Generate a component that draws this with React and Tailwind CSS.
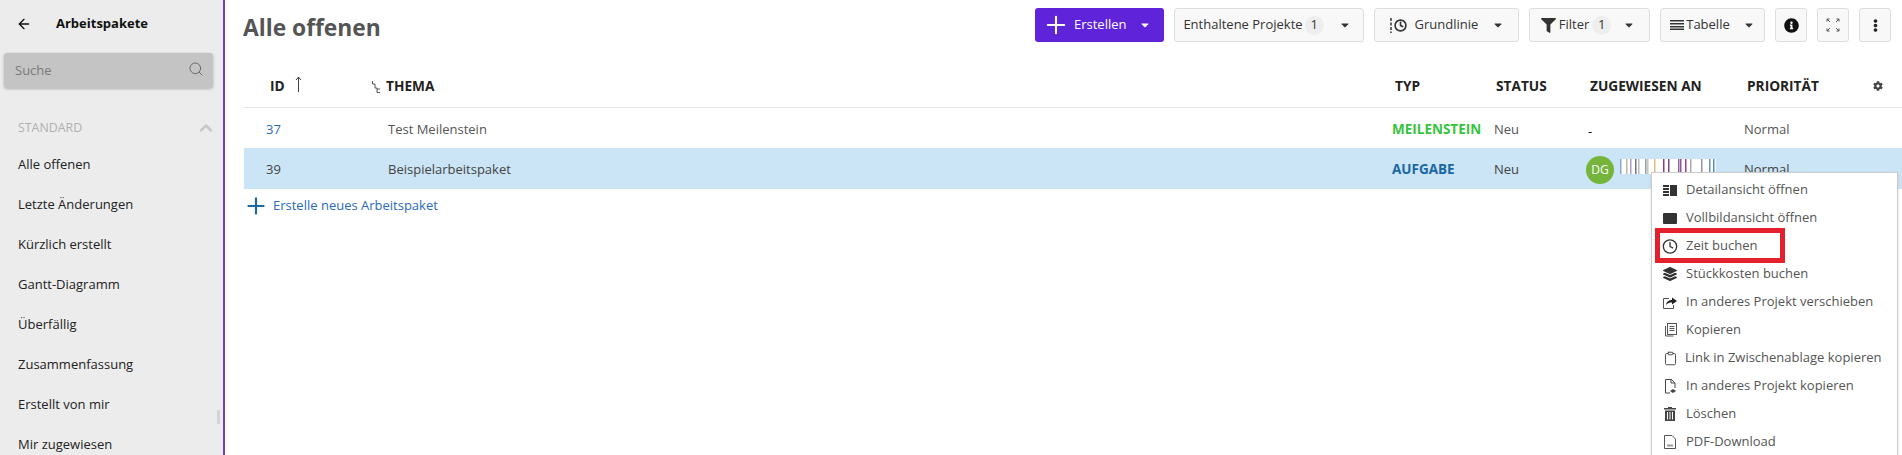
import { ArrowLeft, Search, ChevronUp, Plus, Clock, Clipboard } from 'lucide-react';
import { FaFilter, FaInfoCircle, FaCaretDown, FaCog, FaEllipsisV, FaLayerGroup } from 'react-icons/fa';

const sideItems = ['Alle offenen', 'Letzte Änderungen', 'Kürzlich erstellt', 'Gantt-Diagramm', 'Überfällig', 'Zusammenfassung', 'Erstellt von mir', 'Mir zugewiesen'];

const rowGrid = 'grid grid-cols-[122px_1003px_103px_92px_158px_1fr] pl-[22px] items-center';

// small drawings for the context menu
const DetailIcon = () => (
  <svg width="14" height="11" viewBox="0 0 14 11" fill="#333">
    <rect x="0" y="0" width="6" height="2" />
    <rect x="0" y="3" width="6" height="2" />
    <rect x="0" y="6" width="6" height="2" />
    <rect x="0" y="9" width="6" height="2" />
    <rect x="7" y="0" width="7" height="11" />
  </svg>
);
const FullIcon = () => (
  <svg width="14" height="11" viewBox="0 0 14 11" fill="#333"><rect width="14" height="11" rx="1" /></svg>
);
const MoveIcon = () => (
  <svg width="14" height="13" viewBox="0 0 14 13" fill="none" stroke="#555">
    <path d="M6 2.500H.5v10h10V9" />
    <path d="M3 9c.5-3.500 3-5 6-5V1.500L14 5 9 8.500V6.500C7 6.500 4.500 7 3 9z" fill="#222" stroke="none" />
  </svg>
);
const CopyIcon = () => (
  <svg width="13" height="14" viewBox="0 0 13 14" fill="none" stroke="#555">
    <path d="M1.500 3v10h8" />
    <rect x="3.500" y="0.500" width="9" height="11" />
    <path d="M5.500 3.500h5M5.500 5.500h5M5.500 7.500h5" />
  </svg>
);
const CopyProjectIcon = () => (
  <svg width="13" height="15" viewBox="0 0 13 15" fill="none" stroke="#444">
    <path d="M6 14H1.500V.5h6l3.500 3.500v5" />
    <path d="M7 .5V4h4" />
    <path d="M9 10l3 2-3 2-3-2z" fill="#444" stroke="none" />
  </svg>
);
const TrashIcon = () => (
  <svg width="12" height="14" viewBox="0 0 12 14" fill="#444">
    <rect x="0" y="1" width="12" height="1.500" />
    <rect x="4" y="0" width="4" height="1.500" />
    <path d="M1 3.500h10V14H1zM3 5v7.500h1V5zm2.500 0v7.500h1V5zM8 5v7.500h1V5z" fillRule="evenodd" />
  </svg>
);
const PdfIcon = () => (
  <svg width="12" height="14" viewBox="0 0 12 14" fill="none" stroke="#555">
    <path d="M.5.5h7.500l3.500 3.500v9.500H.5z" />
    <path d="M3 10.500h6" strokeWidth="2" stroke="#999" />
  </svg>
);

const menuItems = [
  ['Detailansicht öffnen', <DetailIcon />],
  ['Vollbildansicht öffnen', <FullIcon />],
  ['Zeit buchen', <Clock size={17} strokeWidth={2} color="#333" />],
  ['Stückkosten buchen', <FaLayerGroup size={14} color="#333" />],
  ['In anderes Projekt verschieben', <MoveIcon />],
  ['Kopieren', <CopyIcon />],
  ['Link in Zwischenablage kopieren', <Clipboard size={15} strokeWidth={1.500} color="#444" />, true],
  ['In anderes Projekt kopieren', <CopyProjectIcon />],
  ['Löschen', <TrashIcon />],
  ['PDF-Download', <PdfIcon />],
];

// assignee name in the picture is pixelated into coloured stripes
const stripes = [[0, '#8aa8d0'], [6, '#bdb8a8'], [10, '#a9a0c0'], [15, '#7b6a94'], [18, '#b0bcb8'], [25, '#8fa0a8'], [27, '#c9c4b8'], [34, '#e0bd78'], [43, '#8a3f7a'], [48, '#7a4a80'], [58, '#9060a0'], [60, '#8a5a9a'], [65, '#a03f80'], [70, '#a8acb0'], [81, '#a090a8'], [89, '#6a90c0'], [93, '#4a90d0']];

function ToolButton({ className, children }) {
  return (
    <button className={`h-[34px] flex items-center justify-center bg-[#f8f8f8] border border-[#dddddd] rounded-[3px] text-[#333333] shrink-0 ${className}`}>
      {children}
    </button>
  );
}

function Badge({ children }) {
  return <span className="w-[19px] h-[19px] rounded-full bg-[#eeeeee] flex items-center justify-center">{children}</span>;
}

export default function App() {
  return (
    <div className="h-[455px] overflow-hidden flex bg-white text-[13px] text-[#333333] relative font-['Open_Sans','Noto_Sans',sans-serif]">
      <aside className="w-[225px] shrink-0 bg-[#ececec] border-r-2 border-[#6f42c1] relative">
        <div className="h-[47px] flex items-center pl-[16px]">
          <ArrowLeft size={16} strokeWidth={2} color="#111" />
          <span className="ml-[24px] font-bold text-[13px] text-[#111111]">Arbeitspakete</span>
        </div>
        <div className="ml-[4px] w-[209px] mt-[6px] h-[35px] pt-[1px] bg-[#c4c4c4] rounded-[3px] shadow-[0_1px_3px_rgba(0,0,0,0.25)] flex items-center justify-between pl-[11px] pr-[9px]">
          <span className="text-[#7a7a7a]">Suche</span>
          <Search size={16} strokeWidth={1.500} color="#6a6a6a" className="-mt-[4px]" />
        </div>
        <div className="mt-[30px] pl-[18px] pr-[7px] h-[20px] flex items-center justify-between">
          <span className="text-[12.400px] text-[#b0b0b0]">STANDARD</span>
          <ChevronUp size={20} strokeWidth={3} color="#c8c8c8" />
        </div>
        <nav className="mt-[7px]">
          {sideItems.map((item) => (
            <div key={item} className="h-[40px] flex items-center pl-[18px] text-[#222222]">{item}</div>
          ))}
        </nav>
        <div className="absolute left-[217px] top-[410px] w-[3px] h-[14px] bg-[#d4d4d4]" />
      </aside>

      <main className="flex-1 min-w-0 pl-[19px]">
        <div className="h-[50px] pt-[8px] flex justify-between pr-[11px]">
          <h1 className="-ml-[1px] text-[22.800px] leading-[40px] font-bold text-[#555555]">Alle offenen</h1>
          <div className="flex gap-[10px]">
            <button className="w-[129px] h-[34px] flex items-center bg-[#5f23d9] rounded-[3px] text-white pl-[7px]">
              <Plus size={28} strokeWidth={1.800} />
              <span className="ml-[4px]">Erstellen</span>
              <FaCaretDown size={12} className="ml-[12px]" />
            </button>
            <ToolButton className="w-[190px] pr-[1px]">
              <span className="-ml-[3px]">Enthaltene Projekte</span>
              <span className="ml-[2px]"><Badge>1</Badge></span>
              <FaCaretDown size={12} className="ml-[15px]" />
            </ToolButton>
            <ToolButton className="w-[145px]">
              <svg width="4" height="15" viewBox="0 0 4 15" stroke="#333" strokeWidth="1.500" strokeDasharray="3 1.500"><path d="M2 0v15" /></svg>
              <Clock size={13} strokeWidth={3} className="ml-[1px]" />
              <span className="ml-[8px]">Grundlinie</span>
              <FaCaretDown size={12} className="ml-[14px]" />
            </ToolButton>
            <ToolButton className="w-[121px] pr-[3px]">
              <FaFilter size={15} />
              <span className="ml-[3px]">Filter</span>
              <span className="ml-[3px]"><Badge>1</Badge></span>
              <FaCaretDown size={12} className="ml-[12px]" />
            </ToolButton>
            <ToolButton className="w-[105px]">
              <svg width="14" height="10" viewBox="0 0 14 10" fill="#333"><rect width="14" height="1.500" /><rect y="3" width="14" height="1.500" /><rect y="6" width="14" height="1.500" /><rect y="8.500" width="14" height="1.500" /></svg>
              <span className="ml-[2px]">Tabelle</span>
              <FaCaretDown size={12} className="ml-[13px]" />
            </ToolButton>
            <ToolButton className="w-[32px]"><FaInfoCircle size={15} color="#111" /></ToolButton>
            <ToolButton className="w-[32px]">
              <svg width="14" height="14" viewBox="0 0 14 14" fill="none" stroke="#555" strokeWidth="1">
                <path d="M1 3.500V1h2.500M1 1l3 3M13 3.500V1h-2.500M13 1l-3 3M1 10.500V13h2.500M1 13l3-3M13 10.500V13h-2.500M13 13l-3-3" />
              </svg>
            </ToolButton>
            <ToolButton className="w-[32px]"><FaEllipsisV size={13} color="#222" /></ToolButton>
          </div>
        </div>

        <div className={`${rowGrid} h-[58px] pt-[15px] border-b border-[#e4e4e4] font-bold text-[13.700px] text-[#222222]`}>
          <div className="pl-[4px] flex items-center">
            <span>ID</span>
            <svg width="7" height="16" viewBox="0 0 7 16" fill="none" stroke="#444" className="ml-[10px] -mt-[3px]"><path d="M3.500 16V1M1 4l2.500-3L6 4" /></svg>
          </div>
          <div className="flex items-center -ml-[16px]">
            <svg width="8" height="12" viewBox="0 0 8 12" fill="none" stroke="#555" className="mr-[6px] mt-[3px]"><path d="M.5 0v3h2.500v4h2v4.500M5 8h3M5 11.500h3" /></svg>
            <span>THEMA</span>
          </div>
          <div className="pl-[4px]">TYP</div>
          <div className="pl-[2px]">STATUS</div>
          <div className="pl-[4px]">ZUGEWIESEN AN</div>
          <div className="flex items-center justify-between pl-[3px] pr-[19px]">
            <span>PRIORITÄT</span>
            <FaCog size={10} color="#444" />
          </div>
        </div>

        <div className={`${rowGrid} h-[40px] pt-[3px] text-[#555555]`}>
          <div className="text-[#2a6bb8]">37</div>
          <div>Test Meilenstein</div>
          <div className="pl-[1px] font-bold text-[13.500px] text-[#35c53f]">MEILENSTEIN</div>
          <div>Neu</div>
          <div className="pl-[2px] mt-[4px] text-[#111111]">-</div>
          <div>Normal</div>
        </div>
        <div className={`${rowGrid} h-[41px] pt-[2px] bg-[#cbe4f6] text-[#444444]`}>
          <div>39</div>
          <div>Beispielarbeitspaket</div>
          <div className="pl-[1px] font-bold text-[13.500px] text-[#1a67a3]">AUFGABE</div>
          <div>Neu</div>
          <div className="flex items-center">
            <span className="w-[28px] h-[28px] rounded-full bg-[#75b53c] text-white text-[12px] flex items-center justify-center">DG</span>
            <svg width="96" height="15" viewBox="0 0 96 15" className="ml-[6px] -mt-[6px] bg-white">
              {stripes.map(([x, color]) => (
                <rect key={x} x={x} y="0" width="1.500" height="15" fill={color} />
              ))}
            </svg>
          </div>
          <div>Normal</div>
        </div>
        <div className="h-[32px] pt-[1px] flex items-center text-[#2a6bb8]">
          <Plus size={26} strokeWidth={2} color="#1a67a3" className="-ml-[1px]" />
          <span className="ml-[4px]">Erstelle neues Arbeitspaket</span>
        </div>
      </main>

      <div className="absolute left-[1651px] top-[172px] w-[247px] bg-white border border-[#cccccc] pt-[3px] text-[#555555] shadow-[0_1px_3px_rgba(0,0,0,0.1)]">
        {menuItems.map(([label, icon, tight]) => (
          <div key={label} className="h-[28px] flex items-center pl-[10px]">
            <span className={`flex justify-center shrink-0 w-[16px] ${tight ? 'mr-[7px]' : 'mr-[8px]'}`}>{icon}</span>
            <span className="whitespace-nowrap">{label}</span>
          </div>
        ))}
      </div>
      <div className="absolute left-[1655px] top-[228px] w-[130px] h-[35px] border-[5px] border-[#e3202c]" />
    </div>
  );
}
